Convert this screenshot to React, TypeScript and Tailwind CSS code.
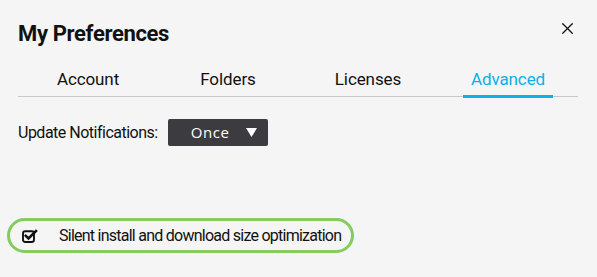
import { X } from 'lucide-react';

const tabs = ['Account', 'Folders', 'Licenses', 'Advanced'];

function CheckSquare() {
  return (
    <svg width="16" height="14" viewBox="0 0 16 14" fill="none">
      <rect x="1" y="2.2" width="11" height="10.8" rx="2.2" stroke="#111" strokeWidth="1.9" />
      <path d="M3.8 6.8 L6.5 9.5 L14 2" stroke="#111" strokeWidth="2.6" strokeLinecap="square" />
    </svg>
  );
}

export default function App() {
  const active = 'Advanced';

  return (
    <div
      className="h-[277px] w-[597px] bg-[#f5f5f5] text-[#111]"
      style={{ fontFamily: 'Roboto, "Liberation Sans", sans-serif' }}
    >
      {/* Encabezado */}
      <div className="flex items-start justify-between pl-[18px] pr-[20px] pt-[19px]">
        <h1 className="text-[22px] font-bold leading-[30px] tracking-[-0.35px]">My Preferences</h1>
        <button className="text-[#111]">
          <X size={19} strokeWidth={1.5} />
        </button>
      </div>

      {/* Pestañas */}
      <div className="ml-[18px] mr-[19px] mt-[19px] flex border-b border-[#c9c9c9]">
        {tabs.map((t) => (
          <div key={t} className="flex flex-1 justify-center">
            <span
              className={`-mb-[2px] px-[8px] pb-[5px] text-[17px] leading-[22px] tracking-[-0.1px] ${
                t === active ? 'border-b-[3px] border-[#0bb0ec] text-[#0bb0ec]' : 'border-b-[3px] border-transparent'
              }`}
            >
              {t}
            </span>
          </div>
        ))}
      </div>

      {/* Notificaciones */}
      <div className="ml-[18px] mt-[22px] flex items-center gap-[10px]">
        <span className="whitespace-nowrap text-[16px] leading-[20px] tracking-[-0.5px]">Update Notifications:</span>
        <button className="flex h-[27px] w-[100px] items-center rounded-[2px] bg-[#3c3b40] pl-[23px] text-white">
          <span
            className="text-[15px] tracking-[0.6px]"
            style={{ fontFamily: '"Open Sans", "DejaVu Sans", sans-serif' }}
          >
            Once
          </span>
          <svg className="ml-[16px]" width="11" height="9" viewBox="0 0 11 9">
            <path d="M0 0 H11 L5.5 9 Z" fill="#fff" />
          </svg>
        </button>
      </div>

      {/* Opción destacada */}
      <div className="ml-[7px] mt-[72px] flex h-[35px] w-[347px] items-center rounded-full border-[3px] border-[#84cc5c] pl-[12px]">
        <CheckSquare />
        <span className="ml-[21px] whitespace-nowrap text-[16px] leading-[20px] tracking-[-0.75px]">
          Silent install and download size optimization
        </span>
      </div>
    </div>
  );
}
